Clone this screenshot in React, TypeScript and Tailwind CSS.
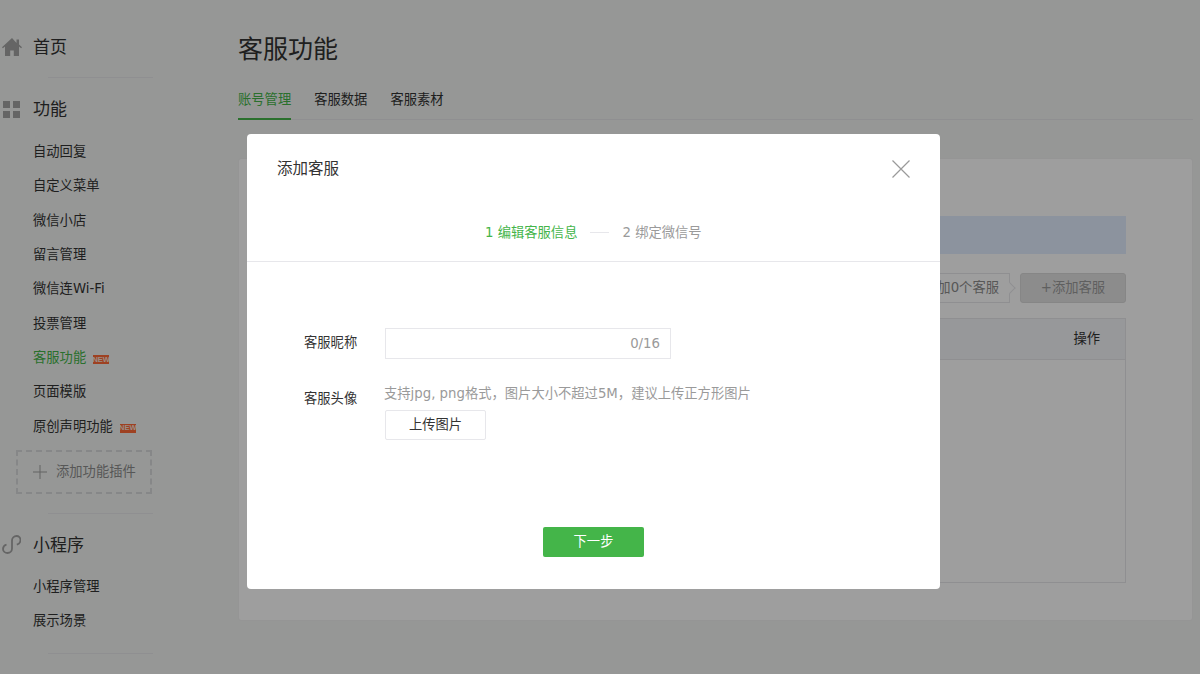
import type { ReactNode } from 'react';

const FONT = 'font-["DejaVu_Sans","Noto_Sans_CJK_SC",sans-serif]';

function NewBadge() {
  return (
    <span className="ml-[7px] mt-[3px] flex h-[9px] w-[16px] items-center justify-center overflow-hidden bg-[#ff6a38] font-['Liberation_Sans'] text-[7.5px] font-bold leading-none text-[#fbe4da]">
      NEW
    </span>
  );
}

function MenuItem({ label, active, badge }: { label: string; active?: boolean; badge?: boolean }) {
  return (
    <div
      className={`flex h-[34.3px] items-center pl-[33px] text-[13.3px] ${
        active ? 'text-[#44b549]' : 'text-[#333]'
      }`}
    >
      {label}
      {badge && <NewBadge />}
    </div>
  );
}

function Divider() {
  return <div className="ml-[48px] h-px w-[105px] bg-[#e7e7eb]" />;
}

function MenuTitle({ icon, label, className }: { icon: ReactNode; label: string; className: string }) {
  return (
    <div className={`flex items-center text-[17px] text-[#333] ${className}`}>
      <span className="flex w-[33px] justify-center pr-[10px]">{icon}</span>
      <span className="pt-[2px]">{label}</span>
    </div>
  );
}

function Sidebar() {
  return (
    <aside className="w-[238px] shrink-0">
      <MenuTitle
        className="mt-[17px] h-[60px]"
        label="首页"
        icon={
          <svg width="20" height="18" viewBox="0 0 20 18" fill="#a3a3a3">
            <path d="M10 0 0 9.200l.9 1L3 8.400V18h5.200v-5.500h3.600V18H17V8.400l2.100 1.800.9-1-3-2.800V1.500h-2.500v3.600z" />
          </svg>
        }
      />
      <Divider />
      <MenuTitle
        className="h-[62px]"
        label="功能"
        icon={
          <svg width="17" height="17" viewBox="0 0 17 17" fill="#a3a3a3">
            <rect width="7" height="7" />
            <rect x="10" width="7" height="7" />
            <rect y="10" width="7" height="7" />
            <rect x="10" y="10" width="7" height="7" />
          </svg>
        }
      />
      <div className="-mt-[5px]">
        <MenuItem label="自动回复" />
        <MenuItem label="自定义菜单" />
        <MenuItem label="微信小店" />
        <MenuItem label="留言管理" />
        <MenuItem label="微信连Wi-Fi" />
        <MenuItem label="投票管理" />
        <MenuItem label="客服功能" active badge />
        <MenuItem label="页面模版" />
        <MenuItem label="原创声明功能" badge />
      </div>
      <div className="ml-[16px] mt-[6px] flex h-[44px] w-[136px] items-center border-2 border-dashed border-[#d9dadc] pl-[15px] text-[13.3px] text-[#8d8d8d]">
        <svg width="14" height="14" viewBox="0 0 14 14" stroke="#a0a0a0" strokeWidth="1" className="mr-[9px]">
          <path d="M7 0v14M0 7h14" />
        </svg>
        添加功能插件
      </div>
      <div className="mt-[19px]">
        <Divider />
      </div>
      <MenuTitle
        className="h-[62px]"
        label="小程序"
        icon={
          <svg width="19" height="19" viewBox="0 0 19 19" fill="none" stroke="#a3a3a3" strokeWidth="1.800">
            <path d="M4.500 9.500C2.500 10.200 1 11.800 1 14c0 2.400 2.200 4 4.500 4 2.600 0 4.500-2 4.500-4.500V5.500C10 3 12 1 14.500 1 16.800 1 18.500 2.800 18.500 5c0 2.300-1.500 4-3.700 4.600" />
          </svg>
        }
      />
      <div className="-mt-[6px]">
        <MenuItem label="小程序管理" />
        <MenuItem label="展示场景" />
      </div>
      <div className="mt-[15px]">
        <Divider />
      </div>
    </aside>
  );
}

function Content() {
  return (
    <main className="w-[955px] shrink-0">
      <h1 className="flex h-[82px] items-center pt-[17px] text-[25px] font-normal leading-none text-[#333]">
        客服功能
      </h1>
      <div className="flex h-[38px] gap-[23px] border-b border-[#e7e7eb] text-[13.3px] text-[#333]">
        <div className="-mb-px flex h-[38px] items-center border-b-2 border-[#44b549] text-[#44b549]">账号管理</div>
        <div className="flex h-[36px] items-center">客服数据</div>
        <div className="flex h-[36px] items-center">客服素材</div>
      </div>
      <section className="mt-[38px] h-[463px] rounded-[3px] border border-[#f0f0f0] bg-white px-[66px] pt-[57px]">
        <div className="h-[38px] bg-[#e2edff]" />
        <div className="mt-[19px] flex h-[30px] items-center justify-end">
          <div className="relative flex h-[30px] items-center border border-[#e7e7eb] bg-white px-[10px] text-[13.3px] text-[#8d8d8d]">
            还可添加0个客服
            <span className="absolute -right-[5px] top-[10px] h-2 w-2 rotate-45 border-r border-t border-[#e7e7eb] bg-white" />
          </div>
          <div className="ml-[10px] flex h-[30px] w-[106px] items-center justify-center rounded-[3px] border border-[#d8d8d8] bg-[#e2e2e2] text-[13.3px] text-[#9a9a9a]">
            +添加客服
          </div>
        </div>
        <div className="mt-[15px] h-[265px] border border-[#e7e7eb]">
          <div className="flex h-[41px] items-center justify-end border-b border-[#e7e7eb] bg-[#f4f5f9] pr-[25px] text-[13.3px] text-[#333]">
            操作
          </div>
        </div>
      </section>
    </main>
  );
}

function AddDialog() {
  return (
    <div className="absolute left-[247px] top-[134px] h-[455px] w-[693px] rounded-[4px] bg-white text-[#333]">
      <div className="flex h-[69px] items-center justify-between px-[30px]">
        <span className="pt-[2px] text-[15.5px]">添加客服</span>
        <svg width="18" height="18" viewBox="0 0 18 18" stroke="#9a9a9a" strokeWidth="1.200">
          <path d="M.5.5l17 17M17.500.5l-17 17" />
        </svg>
      </div>
      <div className="flex h-[59px] items-center border-b border-[#e7e7eb] pl-[238px] pt-[1px] text-[13.3px]">
        <span className="text-[#44b549]">1 编辑客服信息</span>
        <span className="mx-[13px] h-px w-[19px] bg-[#e7e7eb]" />
        <span className="text-[#9a9a9a]">2 绑定微信号</span>
      </div>
      <div className="pl-[57px] pt-[66px] text-[13.3px]">
        <div className="flex">
          <span className="flex h-[30px] w-[81px] items-center">客服昵称</span>
          <div className="flex h-[31px] w-[286px] items-center justify-end border border-[#e7e7eb] pr-[10px] text-[#9a9a9a]">
            0/16
          </div>
        </div>
        <div className="mt-[21px] flex">
          <span className="flex h-[34px] w-[80px] items-center pt-[4px]">客服头像</span>
          <div>
            <p className="flex h-[28px] items-center text-[#9a9a9a]">支持jpg, png格式，图片大小不超过5M，建议上传正方形图片</p>
            <button
              type="button"
              className="ml-px mt-[2px] h-[30px] w-[101px] rounded-[2px] border border-[#e7e7eb] bg-white text-[13.3px] text-[#333]"
            >
              上传图片
            </button>
          </div>
        </div>
      </div>
      <div className="mt-[87px] flex justify-center">
        <button
          type="button"
          className="h-[30px] w-[101px] rounded-[2px] bg-[#44b549] text-[13.3px] text-white"
        >
          下一步
        </button>
      </div>
    </div>
  );
}

export default function App() {
  return (
    <div className={`relative flex h-[674px] w-[1200px] overflow-hidden bg-[#f2f4f2] ${FONT}`}>
      <Sidebar />
      <Content />
      <div className="absolute inset-0 bg-black/[0.38]" />
      <AddDialog />
    </div>
  );
}
